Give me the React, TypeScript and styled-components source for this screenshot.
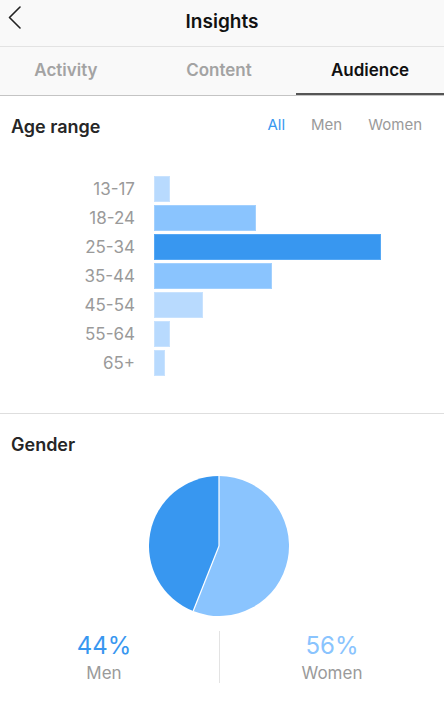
import React, { useState } from 'react'
import styled, { createGlobalStyle } from 'styled-components'

const GlobalStyle = createGlobalStyle`
    body {
        margin:0;
        background:#fff;
        font-family: Inter, "Noto Sans", "Liberation Sans", sans-serif;
        color:#262626;
    }
`

const Page = styled.div`
    width:444px;
    min-height:706px;
    background:#fff;
`
const Header = styled.header`
    display:grid;
    grid-template-columns:1fr auto 1fr;
    height:46px;
    background:#f9f9f9;
    border-bottom:1px solid #e3e3e3;
`
const BackButton = styled.button`
    justify-self:start;
    align-self:start;
    margin:5px 0 0 8px;
    padding:0;
    border:0;
    background:none;
    display:flex;
    cursor:pointer;
`
const Title = styled.h1`
    margin:0;
    align-self:center;
    padding-bottom:4px;
    font-size:19px;
    font-weight:600;
    color:#111;
`
const TabBar = styled.nav`
    display:grid;
    grid-template-columns:repeat(3, 1fr);
    height:48px;
    background:#f9f9f9;
    border-bottom:1px solid #c4c4c4;
`
const Tab = styled.button<{ $active?: boolean; $shift: number }>`
    border:0;
    background:none;
    font-family:inherit;
    font-size:17px;
    font-weight:600;
    color:${p => p.$active ? '#111' : '#a3a3a3'};
    box-shadow:${p => p.$active ? 'inset 0 -2px 0 #555' : 'none'};
    padding:0 ${p => p.$shift}px 2px 0;
    cursor:pointer;
`
const Section = styled.section<{ $bottom: number }>`
    padding:20px 22px ${p => p.$bottom}px 11px;
    & + & {
        border-top:1px solid #dedede;
    }
`
const SectionHead = styled.div`
    display:flex;
    align-items:flex-start;
    justify-content:space-between;
`
const SectionTitle = styled.h2`
    margin:0;
    font-size:18px;
    line-height:22px;
    font-weight:600;
    color:#262626;
`
const Filters = styled.div`
    display:flex;
    gap:26px;
`
const Filter = styled.button<{ $active?: boolean }>`
    border:0;
    background:none;
    padding:0;
    font-family:inherit;
    font-size:15px;
    line-height:18px;
    color:${p => p.$active ? '#3897f0' : '#9a9a9a'};
    cursor:pointer;
`
const Chart = styled.div`
    display:flex;
    flex-direction:column;
    gap:2.5px;
    margin-top:37.5px;
`
const Row = styled.div`
    display:flex;
    align-items:center;
    height:26.5px;
`
const RowLabel = styled.span`
    width:124px;
    text-align:right;
    font-size:17px;
    color:#9a9a9a;
`
const Bar = styled.div<{ $tone: 'light' | 'mid' | 'dark' }>`
    height:100%;
    margin-left:19px;
    box-sizing:border-box;
    background:${p => p.$tone === 'dark' ? '#3897f0' : p.$tone === 'mid' ? '#8ac4fe' : '#b8dafe'};
    border:1px solid ${p => p.$tone === 'dark' ? '#56a8f4' : p.$tone === 'mid' ? '#a2d0fe' : '#c8e2fe'};
`
const PieWrap = styled.div`
    display:flex;
    justify-content:center;
    padding-left:5px;
    margin-top:20px;
`
const Stats = styled.div`
    display:flex;
    margin:15px -22px 0 -11px;
`
const Stat = styled.div<{ $width?: number }>`
    ${p => p.$width ? `width:${p.$width}px;` : 'flex:1;'}
    display:flex;
    flex-direction:column;
    align-items:center;
`
const StatValue = styled.span<{ $color: string }>`
    font-size:24px;
    line-height:30px;
    color:${p => p.$color};
`
const StatLabel = styled.span`
    font-size:17px;
    line-height:24px;
    color:#9a9a9a;
`
const StatDivider = styled.div`
    width:1px;
    height:52px;
    margin-left:11px;
    background:#e3e3e3;
`

const tabs = [
    { label: 'Activity', shift: 16 },
    { label: 'Content', shift: 6 },
    { label: 'Audience', shift: 0 },
]

const ages: { label: string; value: number; tone: 'light' | 'mid' | 'dark' }[] = [
    { label: '13-17', value: 7, tone: 'light' },
    { label: '18-24', value: 45, tone: 'mid' },
    { label: '25-34', value: 100, tone: 'dark' },
    { label: '35-44', value: 52, tone: 'mid' },
    { label: '45-54', value: 21.5, tone: 'light' },
    { label: '55-64', value: 7, tone: 'light' },
    { label: '65+', value: 5, tone: 'light' },
]
const MAX_BAR = 227

const Pie = ({ women }: { women: number }) => {
    const r = 70
    const a = women / 100 * Math.PI * 2
    const x = r + r * Math.sin(a)
    const y = r - r * Math.cos(a)
    const large = women > 50 ? 1 : 0
    return (
        <svg width="140" height="140" viewBox="0 0 140 140">
            <path d={`M70 70 L70 0 A70 70 0 ${large} 1 ${x} ${y} Z`} fill="#8ac4fe" />
            <path d={`M70 70 L${x} ${y} A70 70 0 ${1 - large} 1 70 0 Z`} fill="#3897f0" />
            <line x1="70" y1="70" x2="70" y2="0" stroke="#fff" strokeWidth="1.2" />
            <line x1="70" y1="70" x2={x} y2={y} stroke="#fff" strokeWidth="1.2" />
        </svg>
    )
}

const App = () => {
    const [tab, setTab] = useState('Audience')
    const [filter, setFilter] = useState('All')
    return (
        <>
            <GlobalStyle />
            <Page>
                <Header>
                    <BackButton aria-label="Back">
                        <svg width="14" height="24" viewBox="0 0 14 24">
                            <polyline points="12,2 1.5,12.5 12,23" fill="none" stroke="#222" strokeWidth="1.6" strokeLinecap="round" strokeLinejoin="round" />
                        </svg>
                    </BackButton>
                    <Title>Insights</Title>
                </Header>
                <TabBar>
                    {tabs.map(t => (
                        <Tab key={t.label} $shift={t.shift} $active={tab === t.label} onClick={() => setTab(t.label)}>{t.label}</Tab>
                    ))}
                </TabBar>
                <Section $bottom={37}>
                    <SectionHead>
                        <SectionTitle>Age range</SectionTitle>
                        <Filters>
                            {['All', 'Men', 'Women'].map(f => (
                                <Filter key={f} $active={filter === f} onClick={() => setFilter(f)}>{f}</Filter>
                            ))}
                        </Filters>
                    </SectionHead>
                    <Chart>
                        {ages.map(a => (
                            <Row key={a.label}>
                                <RowLabel>{a.label}</RowLabel>
                                <Bar $tone={a.tone} style={{ width: a.value / 100 * MAX_BAR }} />
                            </Row>
                        ))}
                    </Chart>
                </Section>
                <Section $bottom={20}>
                    <SectionTitle>Gender</SectionTitle>
                    <PieWrap>
                        <Pie women={56} />
                    </PieWrap>
                    <Stats>
                        <Stat $width={208}>
                            <StatValue $color="#3897f0">44%</StatValue>
                            <StatLabel>Men</StatLabel>
                        </Stat>
                        <StatDivider />
                        <Stat>
                            <StatValue $color="#8ac4fe">56%</StatValue>
                            <StatLabel>Women</StatLabel>
                        </Stat>
                    </Stats>
                </Section>
            </Page>
        </>
    )
}

export default App
